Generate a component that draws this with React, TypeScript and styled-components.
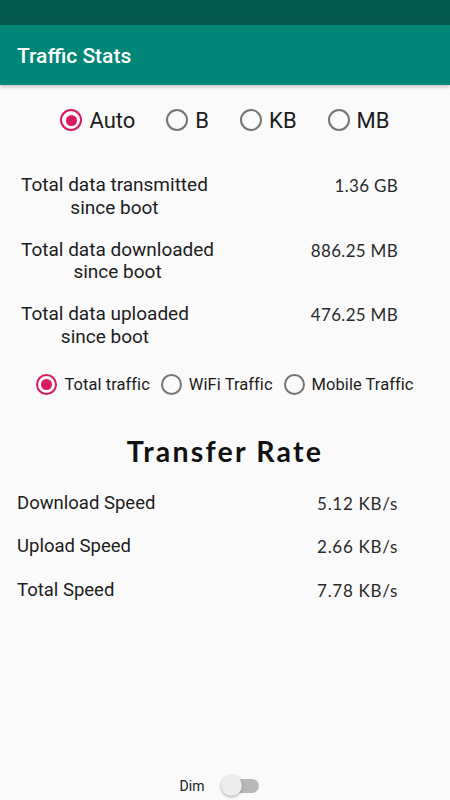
import React from "react";
import styled, { createGlobalStyle } from "styled-components";

const Global = createGlobalStyle`
  html, body { margin: 0; padding: 0; background: #fafafa; }
  body { font-family: Roboto, "Noto Sans", sans-serif; }
  * { box-sizing: border-box; }
`;

const Screen = styled.div`
  width: 450px;
  height: 800px;
  display: flex;
  flex-direction: column;
  background: #fafafa;
  overflow: hidden;
`;

const StatusBar = styled.div`
  height: 25px;
  background: #00574b;
  flex: none;
`;

const AppBar = styled.header`
  height: 60px;
  flex: none;
  background: #008577;
  display: flex;
  align-items: center;
  padding-left: 17px;
  box-shadow: 0 2px 4px rgba(0, 0, 0, 0.22);
  position: relative;
  z-index: 1;
`;

const Title = styled.h1`
  margin: 0;
  font-family: Roboto, sans-serif;
  font-weight: 500;
  font-size: 21px;
  color: #ffffff;
  padding-top: 1px;
`;

const RadioGroup = styled.div<{ $gap: number; $top: number }>`
  display: flex;
  justify-content: center;
  align-items: center;
  height: 30px;
  gap: ${(p) => p.$gap}px;
  margin-top: ${(p) => p.$top}px;
`;

const RadioItem = styled.label<{ $gap: number; $font: number; $spacing?: number }>`
  display: flex;
  align-items: center;
  gap: ${(p) => p.$gap}px;
  font-family: Roboto, sans-serif;
  font-size: ${(p) => p.$font}px;
  letter-spacing: ${(p) => p.$spacing ?? 0}px;
  color: #1c1c1c;
`;

const Circle = styled.span<{ $on: boolean; $size: number }>`
  width: ${(p) => p.$size}px;
  height: ${(p) => p.$size}px;
  border-radius: 50%;
  border: 2px solid ${(p) => (p.$on ? "#d81b60" : "#757575")};
  display: flex;
  align-items: center;
  justify-content: center;
  flex: none;
  &::after {
    content: "";
    width: ${(p) => Math.round(p.$size / 2)}px;
    height: ${(p) => Math.round(p.$size / 2)}px;
    border-radius: 50%;
    background: #d81b60;
    display: ${(p) => (p.$on ? "block" : "none")};
  }
`;

const Stats = styled.section`
  display: flex;
  flex-direction: column;
  gap: 19.5px;
  margin-top: 39px;
  padding: 0 52px 0 21px;
`;

const StatRow = styled.div`
  display: flex;
  justify-content: space-between;
  align-items: flex-start;
`;

const StatLabel = styled.div`
  font-family: Roboto, sans-serif;
  font-size: 19px;
  line-height: 22.5px;
  color: #1c1c1c;
  text-align: center;
`;

const Value = styled.div<{ $spacing?: number }>`
  font-family: Lato, "Open Sans", sans-serif;
  font-size: 17px;
  line-height: 22px;
  color: #2a2a2a;
  margin-top: 1px;
  letter-spacing: ${(p) => p.$spacing ?? 0.3}px;
`;

const SectionTitle = styled.h2`
  margin: 35px 0 0;
  text-align: center;
  font-family: Lato, sans-serif;
  font-weight: 700;
  font-size: 28.5px;
  line-height: 34px;
  letter-spacing: 2.2px;
  color: #111;
`;

const Speeds = styled.section`
  display: flex;
  flex-direction: column;
  gap: 20.5px;
  margin-top: 23.5px;
  padding: 0 52px 0 17px;
`;

const SpeedRow = styled.div`
  display: flex;
  justify-content: space-between;
  align-items: flex-start;
`;

const SpeedLabel = styled.div`
  font-family: Roboto, sans-serif;
  font-size: 18.5px;
  line-height: 22px;
  color: #1c1c1c;
`;

const DimRow = styled.div`
  margin-top: auto;
  margin-bottom: 3px;
  height: 22px;
  display: flex;
  align-items: center;
  justify-content: center;
  gap: 17px;
  padding-right: 11px;
`;

const DimLabel = styled.span`
  font-family: Roboto, sans-serif;
  font-size: 14px;
  color: #1c1c1c;
`;

const Switch = styled.span`
  width: 38px;
  height: 22px;
  position: relative;
  display: block;
  &::before {
    content: "";
    position: absolute;
    left: 3px;
    right: 0;
    top: 4px;
    height: 14px;
    border-radius: 7px;
    background: #b9b9b9;
  }
  &::after {
    content: "";
    position: absolute;
    left: 0;
    top: 0;
    width: 21px;
    height: 21px;
    border-radius: 50%;
    background: #ececec;
    box-shadow: 0 1px 3px rgba(0, 0, 0, 0.35);
  }
`;

type Opt = { label: string; on: boolean };

const units: Opt[] = [
  { label: "Auto", on: true },
  { label: "B", on: false },
  { label: "KB", on: false },
  { label: "MB", on: false },
];

const traffic: Opt[] = [
  { label: "Total traffic", on: true },
  { label: "WiFi Traffic", on: false },
  { label: "Mobile Traffic", on: false },
];

const stats = [
  { l1: "Total data transmitted", l2: "since boot", v: "1.36 GB" },
  { l1: "Total data downloaded", l2: "since boot", v: "886.25 MB" },
  { l1: "Total data uploaded", l2: "since boot", v: "476.25 MB" },
];

const speeds = [
  { l: "Download Speed", v: "5.12 KB/s" },
  { l: "Upload Speed", v: "2.66 KB/s" },
  { l: "Total Speed", v: "7.78 KB/s" },
];

export default function App() {
  return (
    <>
      <Global />
      <Screen>
        <StatusBar />
        <AppBar>
          <Title>Traffic Stats</Title>
        </AppBar>

        <RadioGroup $gap={31} $top={20}>
          {units.map((u) => (
            <RadioItem key={u.label} $gap={7} $font={22}>
              <Circle $on={u.on} $size={22} />
              {u.label}
            </RadioItem>
          ))}
        </RadioGroup>

        <Stats>
          {stats.map((s) => (
            <StatRow key={s.l1}>
              <StatLabel>
                {s.l1}
                <br />
                {s.l2}
              </StatLabel>
              <Value>{s.v}</Value>
            </StatRow>
          ))}
        </Stats>

        <RadioGroup $gap={11} $top={21}>
          {traffic.map((t) => (
            <RadioItem key={t.label} $gap={7} $font={16.5} $spacing={0.05}>
              <Circle $on={t.on} $size={21} />
              {t.label}
            </RadioItem>
          ))}
        </RadioGroup>

        <SectionTitle>Transfer Rate</SectionTitle>

        <Speeds>
          {speeds.map((s) => (
            <SpeedRow key={s.l}>
              <SpeedLabel>{s.l}</SpeedLabel>
              <Value $spacing={0.7}>{s.v}</Value>
            </SpeedRow>
          ))}
        </Speeds>

        <DimRow>
          <DimLabel>Dim</DimLabel>
          <Switch />
        </DimRow>
      </Screen>
    </>
  );
}
